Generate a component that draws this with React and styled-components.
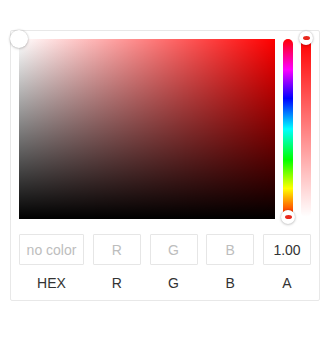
import React from "react";
import styled, { createGlobalStyle } from "styled-components";

const Global = createGlobalStyle`
  html, body { margin: 0; padding: 0; background: #fff; }
  body { font-family: "Liberation Sans", Arial, sans-serif; }
`;

const Page = styled.div`
  padding: 30px 10px 0 10px;
`;

const Card = styled.div`
  width: 310px;
  box-sizing: border-box;
  border: 1px solid #e8e8e8;
  border-radius: 2px;
  padding: 8px 8px 9px 8px;
  background: #fff;
`;

const Top = styled.div`
  display: flex;
  gap: 8px;
  height: 180px;
`;

const Saturation = styled.div`
  position: relative;
  width: 256px;
  height: 180px;
  background:
    linear-gradient(to top, #000, rgba(0,0,0,0)),
    linear-gradient(to right, #fff, rgba(255,255,255,0)),
    #ff0000;
`;

const Bar = styled.div`
  position: relative;
  width: 10px;
  height: ${(p) => p.$h || 180}px;
  border-radius: 5px;
  background: ${(p) => p.$bg};
`;

const Thumb = styled.div`
  position: absolute;
  width: ${(p) => p.$size}px;
  height: ${(p) => p.$size}px;
  border-radius: 50%;
  background: #fff;
  box-shadow: 0 0 2px rgba(0,0,0,0.25), 0 1px 3px rgba(0,0,0,0.15);
  transform: translate(-50%, -50%);
  display: flex;
  align-items: center;
  justify-content: center;
  &::after {
    content: "";
    display: ${(p) => (p.$dot ? "block" : "none")};
    width: 7px;
    height: 4px;
    border-radius: 50%;
    background: #e8281c;
  }
`;

const Inputs = styled.div`
  display: flex;
  justify-content: space-between;
  margin-top: 15px;
`;

const Field = styled.div`
  display: flex;
  flex-direction: column;
  align-items: center;
  width: ${(p) => p.$w}px;
`;

const Box = styled.input`
  box-sizing: border-box;
  width: 100%;
  height: 31px;
  border: 1px solid #e6e6e6;
  border-radius: 1px;
  text-align: center;
  font-family: "Liberation Sans", Arial, sans-serif;
  font-size: 14px;
  color: #333;
  outline: none;
  padding: 0;
  &::placeholder { color: #bdbdbd; }
`;

const Label = styled.div`
  margin-top: 10px;
  font-size: 14px;
  line-height: 16px;
  color: #333;
`;

const fields = [
  { l: "HEX", w: 65, ph: "no color" },
  { l: "R", w: 48, ph: "R" },
  { l: "G", w: 48, ph: "G" },
  { l: "B", w: 48, ph: "B" },
  { l: "A", w: 48, v: "1.00" },
];

export default function App() {
  return (
    <>
      <Global />
      <Page>
        <Card>
          <Top>
            <Saturation>
              <Thumb $size={18} style={{ left: 0, top: 0 }} />
            </Saturation>
            <Bar
              $bg="linear-gradient(to bottom, #f00 0%, #f0f 17%, #00f 33%, #0ff 50%, #0f0 67%, #ff0 83%, #f00 100%)"
            >
              <Thumb $size={14} $dot style={{ left: 5, top: 178 }} />
            </Bar>
            <Bar $h={178} $bg="linear-gradient(to bottom, #ff0000, rgba(255,0,0,0))">
              <Thumb $size={14} $dot style={{ left: 5, top: -1 }} />
            </Bar>
          </Top>
          <Inputs>
            {fields.map((f) => (
              <Field key={f.l} $w={f.w}>
                <Box placeholder={f.ph} defaultValue={f.v} />
                <Label>{f.l}</Label>
              </Field>
            ))}
          </Inputs>
        </Card>
      </Page>
    </>
  );
}
